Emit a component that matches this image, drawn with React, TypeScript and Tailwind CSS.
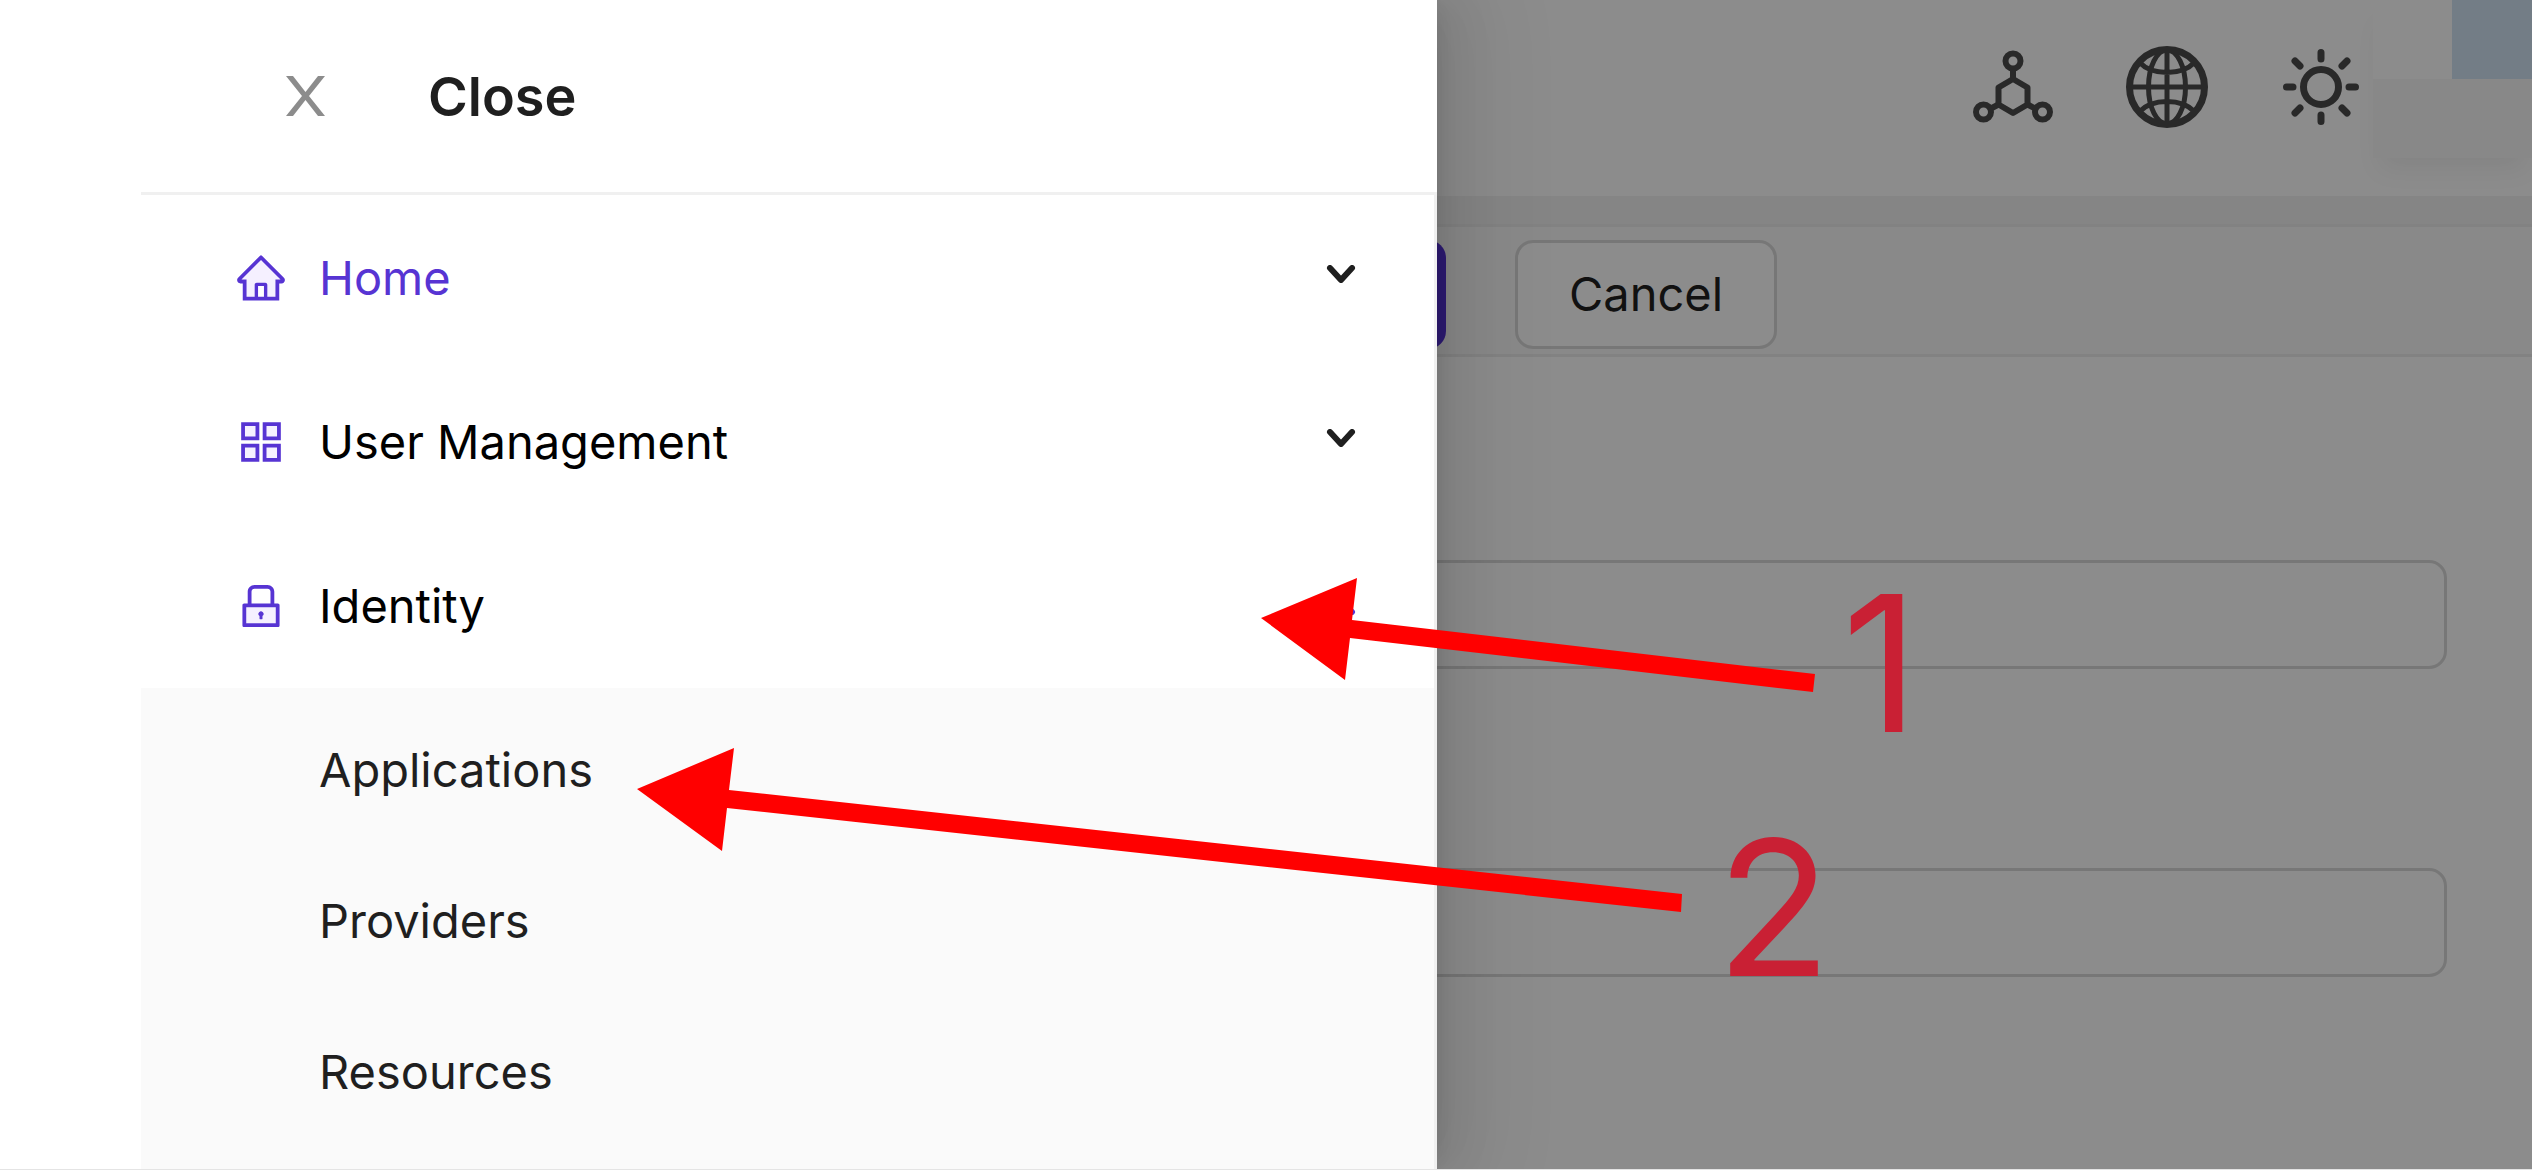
import React from 'react';

const homePaths = {
  secondary:
    'M512.1 172.6l-370 369.7h96V868H392V640c0-22.1 17.9-40 40-40h160c22.1 0 40 17.9 40 40v228h153.9V542.3H882L535.2 195.7l-23.1-23.1z',
  primary:
    'M946.5 505L534.6 93.4a31.93 31.93 0 00-45.2 0L77.5 505c-12 12-18.8 28.3-18.8 45.3 0 35.3 28.7 64 64 64h43.4V940h691.8V614.3h43.4c17 0 33.3-6.7 45.3-18.8a63.6 63.6 0 0018.7-45.3c0-17-6.7-33.1-18.8-45.2zM568 868H456V664h112v204zm217.9-325.7V868H632V640c0-22.1-17.9-40-40-40H432c-22.1 0-40 17.9-40 40v228H238.1V542.3h-96l370-369.7 23.1 23.1L882 542.3h-96.1z',
};

const gridPaths = {
  secondary: 'M180 180h264v264H180zM580 180h264v264H580zM180 580h264v264H180zM580 580h264v264H580z',
  primary:
    'M136 136h344v344H136zM208 208v200h200V208zM544 136h344v344H544zM616 208v200h200V208zM136 544h344v344H136zM208 616v200h200V616zM544 544h344v344H544zM616 616v200h200V616z',
};

const lockPaths = {
  secondary: 'M232 840h560V536H232v304z',
  primary:
    'M484 701v53c0 4.4 3.6 8 8 8h40c4.4 0 8-3.6 8-8v-53a48.01 48.01 0 10-56 0zM832 464h-68V240c0-70.7-57.3-128-128-128H388c-70.7 0-128 57.3-128 128v224h-68c-17.7 0-32 14.3-32 32v384c0 17.7 14.3 32 32 32h640c17.7 0 32-14.3 32-32V496c0-17.7-14.3-32-32-32zM332 240c0-30.9 25.1-56 56-56h248c30.9 0 56 25.1 56 56v224H332V240zm460 600H232V536h560v304z',
};

const menuItems = [
  { label: 'Home', paths: homePaths, active: true, open: false },
  { label: 'User Management', paths: gridPaths, active: false, open: false },
  { label: 'Identity', paths: lockPaths, active: false, open: true },
];

const identityLinks = ['Applications', 'Providers', 'Resources'];

function TwoToneIcon({ paths }: { paths: { primary: string; secondary: string } }) {
  return (
    <svg viewBox="0 0 1024 1024" className="size-[54px] shrink-0" aria-hidden="true">
      <path d={paths.secondary} fill="#f5f0ff" />
      <path d={paths.primary} fill="#5734d3" fillRule="evenodd" />
    </svg>
  );
}

function Chevron({ open }: { open: boolean }) {
  return (
    <svg
      viewBox="0 0 30 18"
      className={open ? 'h-[18px] w-[30px] rotate-180 text-[#5734d3]' : 'mb-2 h-[18px] w-[30px] text-[#1f1f1f]'}
      aria-hidden="true"
    >
      <path d="M4 3l11 12L26 3" fill="none" stroke="currentColor" strokeWidth="6" strokeLinecap="round" strokeLinejoin="round" />
    </svg>
  );
}

function ShareIcon() {
  return (
    <svg viewBox="0 0 84 84" className="size-[84px]" fill="none" stroke="currentColor" strokeWidth="6" aria-hidden="true">
      <circle cx="42" cy="16" r="7.5" />
      <circle cx="12.5" cy="67" r="7.5" />
      <circle cx="71.5" cy="67" r="7.5" />
      <path d="M42 34l14.5 8.5v17L42 68l-14.5-8.5v-17z" strokeLinejoin="round" />
      <path d="M42 23v11M27.5 59.5L19 64M56.5 59.5L65 64" />
    </svg>
  );
}

function GlobeIcon() {
  return (
    <svg viewBox="0 0 84 84" className="size-[84px]" fill="none" stroke="currentColor" strokeWidth="5" aria-hidden="true">
      <circle cx="42" cy="42" r="37.5" strokeWidth="7" />
      <ellipse cx="42" cy="42" rx="18.5" ry="37" />
      <path d="M42 4v76M4 42h76M14 17Q24 27.5 42 27.5T70 17M14 67Q24 56.5 42 56.5T70 67" />
    </svg>
  );
}

function SunIcon() {
  return (
    <svg viewBox="0 0 84 84" className="size-[84px]" fill="none" stroke="currentColor" strokeWidth="7" strokeLinecap="round" aria-hidden="true">
      <circle cx="42" cy="42" r="17.5" />
      <path d="M42 7.5v6.500M42 70v6.500M7.5 42H14M70 42h6.500M16 16l5 5M63 63l5 5M16 68l5-5M63 21l5-5" />
    </svg>
  );
}

function Page() {
  return (
    <main className="flex min-h-screen flex-col bg-white">
      <header className="flex h-[196px] items-start justify-end">
        <div className="mr-[10px] flex h-[174px] items-center gap-[70px] text-[#4c4c4c]">
          <button aria-label="Shortcuts"><ShareIcon /></button>
          <button aria-label="Language"><GlobeIcon /></button>
          <button aria-label="Theme"><SunIcon /></button>
        </div>
        <div className="flex w-[159px] flex-col items-end bg-white shadow-[0_18px_24px_-6px_rgba(0,0,0,0.06)]">
          <div className="h-[79px] w-[80px] bg-[#d1e3f5]" />
          <div className="h-[79px] w-full bg-[#f8f8f8]" />
        </div>
      </header>
      <div className="h-7 bg-[#f3f3f3]" />
      <section className="flex flex-1 flex-col">
        <div className="flex h-[133px] items-start gap-[69px] border-y-[3px] border-[#ededed] bg-[#fafafa] pt-[13px] pl-[1180px]">
          <button aria-label="Save" className="h-[109px] w-[266px] shrink-0 rounded-[18px] bg-[#5734d3]" />
          <button className="h-[109px] shrink-0 rounded-[18px] border-[3px] border-[#d9d9d9] bg-white px-[51px] text-[47px] text-[#1f1f1f]">
            Cancel
          </button>
        </div>
        <div className="flex flex-col gap-[199px] pt-[203px] pr-[85px] pl-[141px]">
          <input aria-label="Name" className="h-[109px] w-full rounded-[18px] border-[3px] border-[#d9d9d9] bg-white px-8 text-[47px]" />
          <input aria-label="Display name" className="h-[109px] w-full rounded-[18px] border-[3px] border-[#d9d9d9] bg-white px-8 text-[47px]" />
        </div>
      </section>
    </main>
  );
}

function Drawer() {
  return (
    <aside className="absolute inset-y-0 left-0 flex w-[1437px] max-w-full flex-col bg-white pl-[141px] shadow-[18px_0_48px_rgba(0,0,0,0.08),9px_0_18px_-12px_rgba(0,0,0,0.12),27px_0_84px_24px_rgba(0,0,0,0.05)]">
      <div className="flex h-[195px] shrink-0 items-center gap-[103px] border-b-[3px] border-[#f0f0f0] pl-[145px]">
        <button aria-label="Close menu">
          <svg viewBox="0 0 39 40" className="h-10 w-[39px]" aria-hidden="true">
            <path
              d="M0 0h7l12.500 16L32 0h7L23 20l16 20h-7L19.500 24 7 40H0l16-20z"
              fill="#8c8c8c"
            />
          </svg>
        </button>
        <h2 className="pt-[2px] text-[54px] leading-[80px] font-semibold text-[#1f1f1f]">Close</h2>
      </div>
      <nav className="flex flex-1 flex-col border-r-[3px] border-[#f0f0f0] pt-[7px]">
        <ul className="flex flex-col gap-3">
          {menuItems.map((item) => (
            <li key={item.label}>
              <button
                aria-expanded={item.open}
                className={`flex h-[152px] w-full items-center gap-[31px] pr-[78px] pl-[93px] text-[47px] ${
                  item.active ? 'text-[#5734d3]' : 'text-black'
                }`}
              >
                <TwoToneIcon paths={item.paths} />
                <span className="flex-1 text-left">{item.label}</span>
                <Chevron open={item.open} />
              </button>
            </li>
          ))}
        </ul>
        <ul className="mt-[6px] flex-1 bg-[#fafafa] pt-[7px]">
          {identityLinks.map((label) => (
            <li key={label}>
              <a href="#" className="flex h-[151px] items-center pl-[178px] text-[47px] text-[#1f1f1f]">
                {label}
              </a>
            </li>
          ))}
        </ul>
      </nav>
    </aside>
  );
}

// Red arrows and step numbers drawn on top of everything
function Annotations() {
  return (
    <div className="pointer-events-none absolute inset-0 text-[189px] leading-none text-[#c92034]">
      <svg width="2532" height="1170" className="absolute top-0 left-0 max-w-none" fill="#ff0000" aria-hidden="true">
        <path d="M1261 618l96-40-5 42 463 54-2 18-463-54-5 42z" />
        <path d="M637 789l97-41-5 42 953 104-1 18-954-104-5 43z" />
      </svg>
      <span className="absolute top-[569px] left-[1842px]">1</span>
      <span className="absolute top-[813px] left-[1716px]">2</span>
    </div>
  );
}

export default function App() {
  return (
    <div className="relative min-h-screen overflow-hidden font-['Inter',sans-serif]">
      <Page />
      <div className="absolute inset-0 bg-black/45" />
      <Drawer />
      <Annotations />
      <div className="absolute inset-x-0 bottom-0 h-px bg-[#e4e4e4]" />
    </div>
  );
}
